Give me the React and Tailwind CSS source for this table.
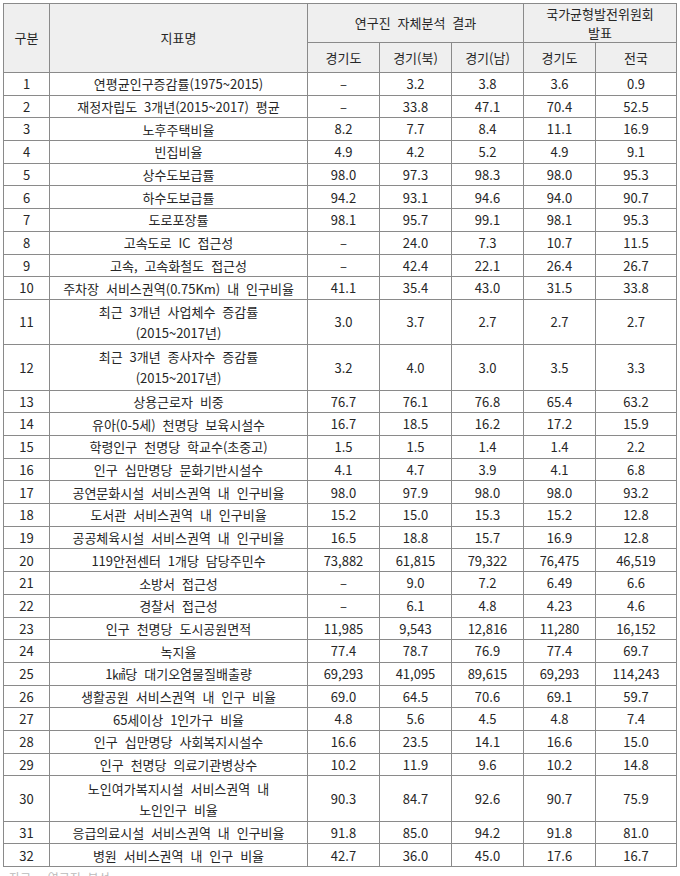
import React from "react";

const rows = [
  ["1", ["연평균인구증감률(1975~2015)"], ["–", "3.2", "3.8", "3.6", "0.9"]],
  ["2", ["재정자립도 3개년(2015~2017) 평균"], ["–", "33.8", "47.1", "70.4", "52.5"]],
  ["3", ["노후주택비율"], ["8.2", "7.7", "8.4", "11.1", "16.9"]],
  ["4", ["빈집비율"], ["4.9", "4.2", "5.2", "4.9", "9.1"]],
  ["5", ["상수도보급률"], ["98.0", "97.3", "98.3", "98.0", "95.3"]],
  ["6", ["하수도보급률"], ["94.2", "93.1", "94.6", "94.0", "90.7"]],
  ["7", ["도로포장률"], ["98.1", "95.7", "99.1", "98.1", "95.3"]],
  ["8", ["고속도로 IC 접근성"], ["–", "24.0", "7.3", "10.7", "11.5"]],
  ["9", ["고속, 고속화철도 접근성"], ["–", "42.4", "22.1", "26.4", "26.7"]],
  ["10", ["주차장 서비스권역(0.75Km) 내 인구비율"], ["41.1", "35.4", "43.0", "31.5", "33.8"]],
  ["11", ["최근 3개년 사업체수 증감률", "(2015~2017년)"], ["3.0", "3.7", "2.7", "2.7", "2.7"]],
  ["12", ["최근 3개년 종사자수 증감률", "(2015~2017년)"], ["3.2", "4.0", "3.0", "3.5", "3.3"]],
  ["13", ["상용근로자 비중"], ["76.7", "76.1", "76.8", "65.4", "63.2"]],
  ["14", ["유아(0-5세) 천명당 보육시설수"], ["16.7", "18.5", "16.2", "17.2", "15.9"]],
  ["15", ["학령인구 천명당 학교수(초중고)"], ["1.5", "1.5", "1.4", "1.4", "2.2"]],
  ["16", ["인구 십만명당 문화기반시설수"], ["4.1", "4.7", "3.9", "4.1", "6.8"]],
  ["17", ["공연문화시설 서비스권역 내 인구비율"], ["98.0", "97.9", "98.0", "98.0", "93.2"]],
  ["18", ["도서관 서비스권역 내 인구비율"], ["15.2", "15.0", "15.3", "15.2", "12.8"]],
  ["19", ["공공체육시설 서비스권역 내 인구비율"], ["16.5", "18.8", "15.7", "16.9", "12.8"]],
  ["20", ["119안전센터 1개당 담당주민수"], ["73,882", "61,815", "79,322", "76,475", "46,519"]],
  ["21", ["소방서 접근성"], ["–", "9.0", "7.2", "6.49", "6.6"]],
  ["22", ["경찰서 접근성"], ["–", "6.1", "4.8", "4.23", "4.6"]],
  ["23", ["인구 천명당 도시공원면적"], ["11,985", "9,543", "12,816", "11,280", "16,152"]],
  ["24", ["녹지율"], ["77.4", "78.7", "76.9", "77.4", "69.7"]],
  ["25", ["1㎢당 대기오염물질배출량"], ["69,293", "41,095", "89,615", "69,293", "114,243"]],
  ["26", ["생활공원 서비스권역 내 인구 비율"], ["69.0", "64.5", "70.6", "69.1", "59.7"]],
  ["27", ["65세이상 1인가구 비율"], ["4.8", "5.6", "4.5", "4.8", "7.4"]],
  ["28", ["인구 십만명당 사회복지시설수"], ["16.6", "23.5", "14.1", "16.6", "15.0"]],
  ["29", ["인구 천명당 의료기관병상수"], ["10.2", "11.9", "9.6", "10.2", "14.8"]],
  ["30", ["노인여가복지시설 서비스권역 내", "노인인구 비율"], ["90.3", "84.7", "92.6", "90.7", "75.9"]],
  ["31", ["응급의료시설 서비스권역 내 인구비율"], ["91.8", "85.0", "94.2", "91.8", "81.0"]],
  ["32", ["병원 서비스권역 내 인구 비율"], ["42.7", "36.0", "45.0", "17.6", "16.7"]],
];

const cell = "flex flex-col items-center justify-center text-center border-r border-b border-[#8a8a8a]";

function Row({ no, label, vals }) {
  const tall = label.length > 1;
  return (
    <div className={`grid grid-cols-[46px_258px_72px_72px_72px_72px_81px] ${tall ? "h-[45.4px]" : "h-[22.7px]"}`}>
      <div className={cell}>{no}</div>
      <div className={`${cell} leading-[21px]`}>
        {label.map((l, i) => (
          <span key={i}>{l}</span>
        ))}
      </div>
      {vals.map((v, i) => (
        <div key={i} className={cell}>
          {v}
        </div>
      ))}
    </div>
  );
}

export default function App() {
  return (
    <div
      className="w-[680px] h-[876px] overflow-hidden bg-white pl-[3px] pt-[3px] text-[13px] text-[#262626] [word-spacing:4px]"
      style={{ fontFamily: '"Noto Sans CJK KR", "Noto Sans", sans-serif' }}
    >
      <div className="w-[674px] border-l border-t border-[#8a8a8a]">
        <div className="grid grid-cols-[46px_258px_72px_72px_72px_72px_81px] grid-rows-[39px_30px] bg-[#efefef]">
          <div className={`${cell} row-span-2`}>구분</div>
          <div className={`${cell} row-span-2`}>지표명</div>
          <div className={`${cell} col-span-3`}>연구진 자체분석 결과</div>
          <div className={`${cell} col-span-2 leading-[19px]`}>
            <span>국가균형발전위원회</span>
            <span>발표</span>
          </div>
          <div className={cell}>경기도</div>
          <div className={cell}>경기(북)</div>
          <div className={cell}>경기(남)</div>
          <div className={cell}>경기도</div>
          <div className={cell}>전국</div>
        </div>
        {rows.map(([no, label, vals]) => (
          <Row key={no} no={no} label={label} vals={vals} />
        ))}
      </div>
      <div className="pt-[3px] pl-[6px] text-[12px] leading-[16px] text-[#bbb]">자료 : 연구진 분석</div>
    </div>
  );
}
